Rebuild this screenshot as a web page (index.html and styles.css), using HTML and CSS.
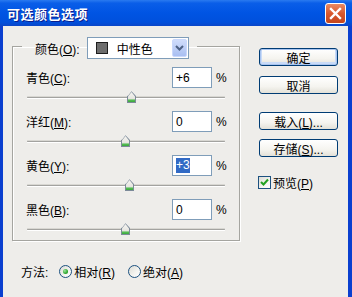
FILE: index.html
```html
<!DOCTYPE html>
<html lang="zh-CN">
<head>
  <meta charset="UTF-8">
  <title>可选颜色选项</title>
  <link rel="stylesheet" href="styles.css">
</head>
<body>
  <div class="window">
    <div class="titlebar">
      <span class="title">可选颜色选项</span>
      <span class="close">
        <svg width="13" height="13" viewBox="0 0 13 13"><path d="M2 2 L11 11 M11 2 L2 11" stroke="#fff" stroke-width="2.4" stroke-linecap="square"/></svg>
      </span>
    </div>

    <div class="client">
      <div class="main">
        <fieldset class="group">
          <legend class="pick">
            <span class="lbl">颜色(<u>O</u>):</span>
            <div class="combo">
              <span class="swatch"></span>
              <span class="combo-text">中性色</span>
              <span class="combo-btn">
                <svg width="9" height="6" viewBox="0 0 9 6"><path d="M1 1 L4.5 4.5 L8 1" fill="none" stroke="#4d6185" stroke-width="2"/></svg>
              </span>
            </div>
          </legend>

          <div class="channel">
            <div class="row">
              <span class="lbl">青色(<u>C</u>):</span>
              <div class="num">+6</div>
              <span class="pct">%</span>
            </div>
            <div class="slider"><span class="track"></span><span class="thumb" style="left:100px"></span></div>
          </div>

          <div class="channel">
            <div class="row">
              <span class="lbl">洋红(<u>M</u>):</span>
              <div class="num">0</div>
              <span class="pct">%</span>
            </div>
            <div class="slider"><span class="track"></span><span class="thumb" style="left:94px"></span></div>
          </div>

          <div class="channel">
            <div class="row">
              <span class="lbl">黄色(<u>Y</u>):</span>
              <div class="num"><span class="sel">+3</span></div>
              <span class="pct">%</span>
            </div>
            <div class="slider"><span class="track"></span><span class="thumb" style="left:98px"></span></div>
          </div>

          <div class="channel">
            <div class="row">
              <span class="lbl">黑色(<u>B</u>):</span>
              <div class="num">0</div>
              <span class="pct">%</span>
            </div>
            <div class="slider"><span class="track"></span><span class="thumb" style="left:94px"></span></div>
          </div>
        </fieldset>

        <div class="actions">
          <button type="button" class="btn default">确定</button>
          <button type="button" class="btn cancel">取消</button>
          <button type="button" class="btn load">载入(<u>L</u>)...</button>
          <button type="button" class="btn save">存储(<u>S</u>)...</button>
          <div class="check">
            <span class="box">
              <svg width="9" height="9" viewBox="0 0 9 9"><path d="M1 4 L3.5 6.5 L8 1.5" fill="none" stroke="#21a121" stroke-width="2"/></svg>
            </span>
            <span>预览(<u>P</u>)</span>
          </div>
        </div>
      </div>

      <div class="method">
        <span class="lbl">方法:</span>
        <span class="radio on"></span>
        <span class="opt">相对(<u>R</u>)</span>
        <span class="radio"></span>
        <span class="opt">绝对(<u>A</u>)</span>
      </div>
    </div>
  </div>
</body>
</html>
```

FILE: styles.css
```css
body {
  margin: 0;
  font: 12px "Liberation Sans", "Noto Sans CJK SC", sans-serif;
  color: #000;
}

.window {
  width: 352px;
  height: 297px;
  display: flex;
  flex-direction: column;
}

.titlebar {
  height: 26px;
  flex-shrink: 0;
  display: flex;
  align-items: center;
  justify-content: space-between;
  padding: 0 6px 0 7px;
  background: linear-gradient(to bottom, #2a7af0 0%, #0a5ee8 12%, #0054e3 50%, #0050dc 85%, #0a46c8 100%);
}

.title {
  color: #fff;
  font: bold 13px "Noto Sans CJK SC", sans-serif;
  letter-spacing: 0.5px;
  text-shadow: 1px 1px #0a1e8c;
}

.close {
  width: 21px;
  height: 21px;
  box-sizing: border-box;
  display: flex;
  align-items: center;
  justify-content: center;
  border: 1px solid #fff;
  border-radius: 3px;
  background: linear-gradient(to bottom, #e98a63 0%, #d9582e 50%, #c4451c 100%);
}

.client {
  flex: 1;
  background: #eeedea;
  border-left: 3px solid #0a3fcf;
  border-right: 4px solid #0a3fcf;
  padding-left: 9px;
}

.main {
  display: flex;
  align-items: flex-start;
}

u {
  text-decoration: underline;
  text-underline-offset: 1px;
}

/* group box */
.group {
  width: 228px;
  box-sizing: border-box;
  margin: 7px 0 0;
  padding: 8px 10px 0 13px;
  border: 1px solid #a5a5a0;
  box-shadow: inset 1px 1px #fff, 1px 1px #fff;
  min-inline-size: 0;
}

.pick {
  display: flex;
  align-items: center;
  margin-left: -4px;
  padding: 4px 8px 0 13px;
}

.pick .lbl {
  margin-right: 7px;
}

.combo {
  width: 102px;
  height: 22px;
  box-sizing: border-box;
  display: flex;
  align-items: center;
  background: #fff;
  border: 1px solid #7f9db9;
}

.swatch {
  width: 12px;
  height: 12px;
  box-sizing: border-box;
  margin-left: 8px;
  background: #6d6d6d;
  border: 1px solid #1e1e1e;
}

.combo-text {
  margin-left: 9px;
  flex: 1;
}

.combo-btn {
  width: 15px;
  height: 18px;
  box-sizing: border-box;
  margin-right: 1px;
  display: flex;
  align-items: center;
  justify-content: center;
  border: 1px solid #c9d8fc;
  border-radius: 2px;
  background: linear-gradient(to bottom, #cfdcfb 0%, #b9cbf5 60%, #a9bff2 100%);
}

.channel .row {
  height: 21px;
  display: flex;
  align-items: center;
}

.row .lbl {
  flex: 1;
}

.num {
  width: 40px;
  height: 21px;
  box-sizing: border-box;
  padding: 0 3px;
  display: flex;
  align-items: center;
  background: #fff;
  border: 1px solid #7f9db9;
}

.sel {
  background: #316ac5;
  color: #fff;
  line-height: 15px;
}

.pct {
  width: 13px;
  margin-left: 4px;
}

.slider {
  position: relative;
  height: 23px;
  margin: 0 4px 0 1px;
}

.channel:last-child .slider {
  height: 20px;
}

.track {
  position: absolute;
  left: 0;
  right: 0;
  top: 9px;
  height: 1px;
  background: #a3a3a0;
  border-radius: 1px;
  box-shadow: 0 1px #fff, 0 -1px #d8d7d2;
}

.thumb {
  position: absolute;
  top: 3px;
  width: 9px;
  height: 12px;
  background: linear-gradient(to bottom, #f7f7f4 0%, #e6e5e0 65%, #58be58 75%, #2b9f2b 100%);
  clip-path: polygon(50% 0, 100% 40%, 100% 100%, 0 100%, 0 40%);
}

.thumb::after {
  content: "";
  position: absolute;
  inset: 0;
  background: #7c8a99;
  clip-path: polygon(50% 0, 100% 40%, 100% 100%, 0 100%, 0 40%, 1px 40%, 1px calc(100% - 1px), calc(100% - 1px) calc(100% - 1px), calc(100% - 1px) 45%, 50% 1px, 1px 45%, 1px 40%);
}

/* right column */
.actions {
  display: flex;
  flex-direction: column;
  margin-left: 19px;
  padding-top: 22px;
}

.btn {
  width: 79px;
  height: 18px;
  padding: 0;
  font: inherit;
  color: #000;
  border: 1px solid #003c74;
  border-radius: 3px;
  background: linear-gradient(to bottom, #ffffff 0%, #f5f4ef 60%, #e3e1d8 100%);
}

.default {
  box-shadow: inset 0 0 0 1px #a8c4f0, inset 0 -1px 0 2px #c9dbf7;
}

.cancel { margin-top: 10px; }
.load { margin-top: 18px; }
.save { margin-top: 9px; }

.check {
  display: flex;
  align-items: center;
  margin-top: 17px;
  margin-left: -1px;
}

.box {
  width: 13px;
  height: 13px;
  box-sizing: border-box;
  margin-right: 2px;
  display: flex;
  align-items: center;
  justify-content: center;
  border: 1px solid #1c5180;
  background: linear-gradient(135deg, #dcdcd5 0%, #f4f4f0 60%, #fff 100%);
}

/* method row */
.method {
  display: flex;
  align-items: center;
  margin-top: 22px;
  margin-left: 9px;
}

.radio {
  width: 13px;
  height: 13px;
  box-sizing: border-box;
  margin-left: 11px;
  margin-right: 2px;
  display: flex;
  align-items: center;
  justify-content: center;
  border: 1px solid #1c5180;
  border-radius: 50%;
  background: linear-gradient(135deg, #dcdcd5 0%, #f4f4f0 60%, #fff 100%);
}

.radio + .opt + .radio {
  margin-left: 13px;
}

.radio.on::after {
  content: "";
  width: 5px;
  height: 5px;
  border-radius: 50%;
  background: radial-gradient(circle at 35% 35%, #9ee59e 0%, #2fa82f 60%, #1b8a1b 100%);
}
```
